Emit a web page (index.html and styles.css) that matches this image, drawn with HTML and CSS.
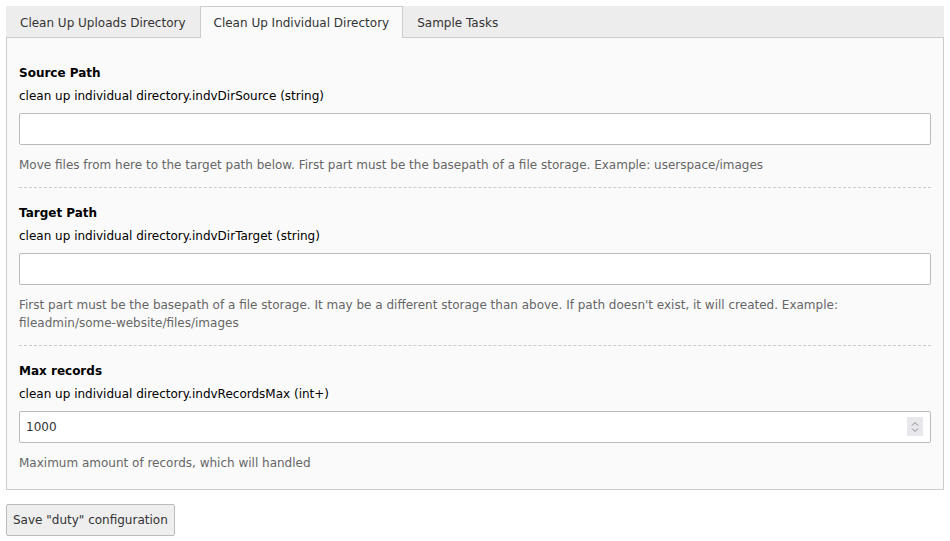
FILE: index.html
```html
<!DOCTYPE html>
<html lang="en">
<head>
    <meta charset="UTF-8">
    <title>Duty configuration</title>
    <link rel="stylesheet" href="styles.css">
</head>
<body>
    <form class="config">
        <div class="tabs">
            <div class="tab">Clean Up Uploads Directory</div>
            <div class="tab active">Clean Up Individual Directory</div>
            <div class="tab">Sample Tasks</div>
        </div>

        <div class="panel">
            <div class="field">
                <div class="field-title">Source Path</div>
                <label class="field-label" for="source">clean up individual directory.indvDirSource (string)</label>
                <input class="field-input" type="text" id="source">
                <div class="field-help">Move files from here to the target path below. First part must be the basepath of a file storage. Example: userspace/images</div>
            </div>

            <div class="field">
                <div class="field-title">Target Path</div>
                <label class="field-label" for="target">clean up individual directory.indvDirTarget (string)</label>
                <input class="field-input" type="text" id="target">
                <div class="field-help">First part must be the basepath of a file storage. It may be a different storage than above. If path doesn't exist, it will created. Example: fileadmin/some-website/files/images</div>
            </div>

            <div class="field">
                <div class="field-title">Max records</div>
                <label class="field-label" for="max">clean up individual directory.indvRecordsMax (int+)</label>
                <div class="number-wrap">
                    <input class="field-input" type="text" id="max" value="1000">
                    <span class="spinner">
                        <svg width="10" height="14" viewBox="0 0 10 14">
                            <path d="M2 5.5 L5 2.5 L8 5.5" fill="none" stroke="#888" stroke-width="1"/>
                            <path d="M2 8.5 L5 11.5 L8 8.5" fill="none" stroke="#888" stroke-width="1"/>
                        </svg>
                    </span>
                </div>
                <div class="field-help">Maximum amount of records, which will handled</div>
            </div>
        </div>

        <button class="save" type="button">Save "duty" configuration</button>
    </form>
</body>
</html>
```

FILE: styles.css
```css
* {
    box-sizing: border-box;
    margin: 0;
    padding: 0;
}

body {
    font-family: "DejaVu Sans", Verdana, sans-serif;
    font-size: 11px;
    line-height: 18px;
    color: #333;
    background: #fff;
    padding: 6px;
}

.tabs {
    display: flex;
    background-color: #ededed;
    height: 32px;
}

.tab {
    padding: 7px 13px;
    border: 1px solid transparent;
    border-bottom: none;
    color: #333;
    font-size: 12px;
}

.tab.active {
    background-color: #fafafa;
    border-color: #ccc;
    height: 32px;
}

.panel {
    background-color: #fafafa;
    border: 1px solid #ccc;
    margin-top: -1px;
    padding: 17px 12px 10px;
}

.field {
    padding: 9px 0 13px;
    border-bottom: 1px dashed #ccc;
}

.field + .field {
    padding-top: 16px;
}

.field:last-child {
    border-bottom: none;
    padding-bottom: 7px;
}

.field-title {
    font-weight: bold;
    font-size: 12px;
    color: #000;
    line-height: 18px;
}

.field-label {
    display: block;
    font-size: 12px;
    color: #000;
    margin-top: 5px;
}

.field-input {
    display: block;
    width: 100%;
    height: 32px;
    margin-top: 8px;
    padding: 0 6px;
    border: 1px solid #bbb;
    border-radius: 2px;
    background: #fff;
    font-family: inherit;
    font-size: 12px;
    color: #333;
}

.field-help {
    margin-top: 11px;
    font-size: 12px;
    color: #666;
}

.number-wrap {
    position: relative;
}

.spinner {
    position: absolute;
    right: 8px;
    top: 6px;
    width: 16px;
    height: 19px;
    background-color: #e8e8ec;
    display: flex;
    align-items: center;
    justify-content: center;
}

.save {
    margin-top: 14px;
    height: 32px;
    padding: 0 6px;
    border: 1px solid #bbb;
    border-radius: 2px;
    background-color: #eee;
    font-family: inherit;
    font-size: 12px;
    color: #333;
}
```
